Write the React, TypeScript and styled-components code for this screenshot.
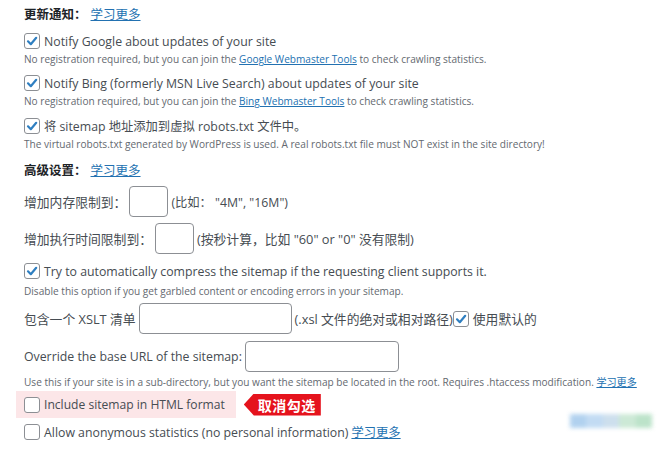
import React from 'react';
import styled, { createGlobalStyle } from 'styled-components';

const GlobalStyle = createGlobalStyle`
  html, body {
    margin: 0;
    padding: 0;
    background: #ffffff;
  }
  body {
    font-family: "Open Sans", "Noto Sans", "Noto Sans CJK SC", sans-serif;
    color: #464c52;
  }
`;

const CheckMark: React.FC<{ checked?: boolean }> = ({ checked }) => (
  <Box>
    {checked && (
      <svg width="14" height="14" viewBox="0 0 14 14">
        <path d="M3 7.3 L5.8 10.2 L11.2 3.8" fill="none" stroke="#2f7fc1" strokeWidth="2.2" strokeLinecap="round" strokeLinejoin="round" />
      </svg>
    )}
  </Box>
);

const App: React.FC = () => {
  return (
    <>
      <GlobalStyle />
      <Page>
        <Heading top={5}>
          更新通知：<Link>学习更多</Link>
        </Heading>

        <CheckRow top={6}>
          <CheckMark checked />
          Notify Google about updates of your site
        </CheckRow>
        <Desc>
          No registration required, but you can join the <Link>Google Webmaster Tools</Link> to check crawling statistics.
        </Desc>

        <CheckRow top={6}>
          <CheckMark checked />
          Notify Bing (formerly MSN Live Search) about updates of your site
        </CheckRow>
        <Desc>
          No registration required, but you can join the <Link>Bing Webmaster Tools</Link> to check crawling statistics.
        </Desc>

        <CheckRow top={7}>
          <CheckMark checked />
          将 sitemap 地址添加到虚拟 robots.txt 文件中。
        </CheckRow>
        <Desc>
          The virtual robots.txt generated by WordPress is used. A real robots.txt file must NOT exist in the site directory!
        </Desc>

        <Heading top={9}>
          高级设置：<Link>学习更多</Link>
        </Heading>

        <InputRow top={5}>
          <Cjk>增加内存限制到：</Cjk>
          <TextInput w={39} />
          (比如： "4M", "16M")
        </InputRow>

        <InputRow top={6}>
          <Cjk>增加执行时间限制到：</Cjk>
          <TextInput w={39} />
          <Cjk>(按秒计算，比如 "60" or "0" 没有限制)</Cjk>
        </InputRow>

        <CheckRow top={7}>
          <CheckMark checked />
          Try to automatically compress the sitemap if the requesting client supports it.
        </CheckRow>
        <Desc top={2}>
          Disable this option if you get garbled content or encoding errors in your sitemap.
        </Desc>

        <InputRow top={4}>
          <Cjk>包含一个 XSLT 清单</Cjk>
          <TextInput w={153} />
          <Cjk>(.xsl 文件的绝对或相对路径)</Cjk>
          <CheckMark checked />
          <Cjk>使用默认的</Cjk>
        </InputRow>

        <InputRow top={7}>
          Override the base URL of the sitemap:
          <TextInput w={154} />
        </InputRow>
        <Desc top={2}>
          Use this if your site is in a sub-directory, but you want the sitemap be located in the root. Requires .htaccess modification. <Link>学习更多</Link>
        </Desc>

        <MarkedRow>
          <Highlight>
            <CheckMark />
            Include sitemap in HTML format
          </Highlight>
          <Tag>取消勾选</Tag>
        </MarkedRow>

        <CheckRow top={4}>
          <CheckMark />
          Allow anonymous statistics (no personal information)<Link>学习更多</Link>
        </CheckRow>

        <Watermark>
          <Blot color="#a9cdee" />
          <Blot color="#bcd8f2" />
          <Blot color="#c8dcec" />
          <Blot color="#c7e7d2" />
          <Blot color="#b5e0c4" />
        </Watermark>
      </Page>
    </>
  );
};

const Page = styled.div`
  position: relative;
  width: 667px;
  height: 466px;
  padding-left: 24px;
  box-sizing: border-box;
  display: flex;
  flex-direction: column;
  align-items: flex-start;
  overflow: hidden;
`;

const Heading = styled.div<{ top: number }>`
  margin-top: ${p => p.top}px;
  height: 20px;
  line-height: 20px;
  font-size: 12.5px;
  font-weight: 700;
  color: #1d2327;
  & > a {
    font-weight: 400;
    margin-left: 4px;
  }
`;

const Link = styled.a`
  color: #2271b1;
  text-decoration: underline;
  cursor: pointer;
`;

const Box = styled.span`
  display: inline-flex;
  align-items: center;
  justify-content: center;
  width: 14px;
  height: 14px;
  border: 1px solid #8c8f94;
  border-radius: 3px;
  background: #ffffff;
  flex-shrink: 0;
  margin-right: 4px;
`;

const CheckRow = styled.div<{ top: number }>`
  margin-top: ${p => p.top}px;
  height: 20px;
  display: flex;
  align-items: center;
  font-size: 12.3px;
  white-space: nowrap;
  & > a {
    margin-left: 3px;
  }
`;

const Desc = styled.div<{ top?: number }>`
  margin-top: ${p => p.top ?? 0}px;
  height: 16px;
  line-height: 16px;
  font-size: 10.1px;
  color: #646970;
  white-space: nowrap;
`;

const InputRow = styled.div<{ top: number }>`
  margin-top: ${p => p.top}px;
  height: 31px;
  display: flex;
  align-items: center;
  font-size: 12.3px;
  white-space: nowrap;
`;

const Cjk = styled.span`
  font-size: 12.8px;
`;

const TextInput = styled.input.attrs({ type: 'text' })<{ w: number }>`
  width: ${p => p.w}px;
  height: 31px;
  box-sizing: border-box;
  border: 1px solid #8c8f94;
  border-radius: 4px;
  background: #ffffff;
  margin: 0 3px 0 3px;
  padding: 0 6px;
  outline: none;
`;

const MarkedRow = styled.div`
  margin-top: 1px;
  margin-left: -8px;
  display: flex;
  align-items: center;
  gap: 8px;
`;

const Highlight = styled.div`
  height: 27px;
  display: flex;
  align-items: center;
  padding: 0 11px 0 8px;
  background: #fce6e8;
  font-size: 12.1px;
  white-space: nowrap;
`;

const Tag = styled.div`
  height: 22px;
  width: 77px;
  box-sizing: border-box;
  padding-left: 14px;
  display: flex;
  align-items: center;
  background: #e5131d;
  color: #ffffff;
  font-size: 14px;
  font-weight: 700;
  letter-spacing: 0.5px;
  clip-path: polygon(0 50%, 10px 0, 100% 0, 100% 100%, 10px 100%);
`;

const Watermark = styled.div`
  position: absolute;
  left: 570px;
  top: 414px;
  width: 82px;
  height: 14px;
  display: flex;
  filter: blur(2px);
  opacity: 0.9;
`;

const Blot = styled.span<{ color: string }>`
  flex: 1;
  background: ${p => p.color};
`;

export default App;
